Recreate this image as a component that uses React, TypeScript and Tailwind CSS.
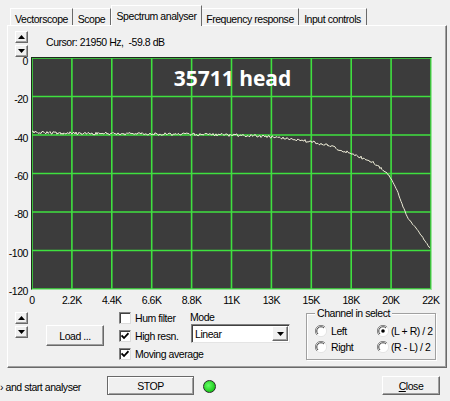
import React from "react";

const PLOT_W = 399;
const PLOT_H = 231;

const KEYS: [number, number][] = [
  [32, 132], [60, 133], [100, 133.5], [150, 134], [200, 134.5], [250, 135.5],
  [280, 137.5], [300, 140], [327, 145], [350, 153], [372, 162], [387, 173],
  [392, 180], [397, 190], [403, 207], [408, 218], [415, 227], [423, 238], [430, 248],
];

function interp(x: number): number {
  for (let i = 0; i < KEYS.length - 1; i++) {
    const [x0, y0] = KEYS[i];
    const [x1, y1] = KEYS[i + 1];
    if (x >= x0 && x <= x1) return y0 + ((y1 - y0) * (x - x0)) / (x1 - x0);
  }
  return KEYS[KEYS.length - 1][1];
}

function noise(i: number): number {
  const s = Math.sin(i * 12.9898 + 4.1) * 43758.5453;
  return s - Math.floor(s) - 0.5;
}

function curvePath(): string {
  const pts: string[] = [];
  for (let x = 32; x <= 430; x += 1) {
    const amp = x < 385 ? 2.8 : 1.2;
    const y = interp(x) + noise(x) * amp - 58;
    pts.push(`${(x - 32).toFixed(1)},${y.toFixed(1)}`);
  }
  return "M" + pts.join(" L");
}

function Plot() {
  const xs = Array.from({ length: 11 }, (_, i) => (i * PLOT_W) / 10);
  const ys = Array.from({ length: 7 }, (_, j) => (j * PLOT_H) / 6);
  return (
    <div className="relative ml-[2px] mt-[2px] w-[401px] h-[233px] border border-t-[#1e2a1e] border-l-[#1e2a1e] border-r-[#9be39b] border-b-[#9be39b] bg-[#3c3c3c]">
      <svg width={PLOT_W} height={PLOT_H} className="block">
        <rect x={0} y={0} width={PLOT_W} height={PLOT_H} fill="#3c3c3c" />
        {xs.map((x, i) => (
          <line key={"x" + i} x1={x} y1={0} x2={x} y2={PLOT_H} stroke="#3fe03f" strokeWidth={1.6} />
        ))}
        {ys.map((y, j) => (
          <line key={"y" + j} x1={0} y1={y} x2={PLOT_W} y2={y} stroke="#3fe03f" strokeWidth={1.6} />
        ))}
        <path d={curvePath()} fill="none" stroke="#ecebd6" strokeWidth={1} />
      </svg>
      <div className="absolute left-0 right-0 top-[6px] flex justify-center">
        <span className="font-['Open_Sans',sans-serif] font-bold text-[21px] leading-[28px] tracking-normal text-white ml-[2px]">35711 head</span>
      </div>
    </div>
  );
}

function ArrowUp() {
  return (
    <svg width="7" height="4" viewBox="0 0 7 4" className="block">
      <path d="M3.5 0 L7 4 L0 4 Z" fill="#000" />
    </svg>
  );
}
function ArrowDown() {
  return (
    <svg width="7" height="4" viewBox="0 0 7 4" className="block">
      <path d="M0 0 L7 0 L3.5 4 Z" fill="#000" />
    </svg>
  );
}

function UpDown() {
  return (
    <div className="flex flex-col gap-[2px] w-[13px]">
      <div className="h-[12px] w-[13px] flex items-center justify-center bg-[#f0f0f0] border border-t-white border-l-white border-r-[#696969] border-b-[#696969] shadow-[inset_-1px_-1px_0_#a0a0a0]">
        <ArrowUp />
      </div>
      <div className="h-[12px] w-[13px] flex items-center justify-center bg-[#f0f0f0] border border-t-white border-l-white border-r-[#696969] border-b-[#696969] shadow-[inset_-1px_-1px_0_#a0a0a0]">
        <ArrowDown />
      </div>
    </div>
  );
}

function CheckBox({ checked }: { checked: boolean }) {
  return (
    <div className="w-[12px] h-[12px] bg-white border border-t-[#808080] border-l-[#808080] border-r-[#dcdcdc] border-b-[#dcdcdc] shadow-[inset_1px_1px_0_#404040] flex items-center justify-center shrink-0">
      {checked && (
        <svg width="8" height="8" viewBox="0 0 8 8" className="block">
          <path d="M0.5 3.5 L3 6 L7.5 1.2" fill="none" stroke="#000" strokeWidth={1.8} />
        </svg>
      )}
    </div>
  );
}

function Radio({ checked }: { checked: boolean }) {
  return (
    <svg width="12" height="12" viewBox="0 0 12 12" className="block shrink-0">
      <circle cx="6" cy="6" r="5.5" fill="#fff" />
      <path d="M10 2 A5.5 5.5 0 0 0 2 10" fill="none" stroke="#808080" strokeWidth={1} />
      <path d="M9 3 A4.2 4.2 0 0 0 3 9" fill="none" stroke="#404040" strokeWidth={1} />
      <path d="M2 10 A5.5 5.5 0 0 0 10 2" fill="none" stroke="#e4e4e4" strokeWidth={1} />
      {checked && <circle cx="6" cy="6" r="1.8" fill="#000" />}
    </svg>
  );
}

function Tab({ label, cls }: { label: string; cls: string }) {
  return (
    <div className={cls}>
      <span className="whitespace-nowrap">{label}</span>
    </div>
  );
}

export default function App() {
  const yLabels = ["0", "-20", "-40", "-60", "-80", "-100", "-120"];
  const xLabels = ["0", "2.2K", "4.4K", "6.6K", "8.8K", "11K", "13K", "15K", "18K", "20K", "22K"];
  return (
    <div className="w-[450px] h-[401px] bg-[#f0f0f0] overflow-hidden flex flex-col text-black text-[10.5px] tracking-[-0.45px] leading-[12px] font-['Liberation_Sans',Arial,sans-serif]">
      {/* Tabs */}
      <div className="h-[25px] flex items-end pl-[10px] shrink-0">
        <Tab label="Vectorscope" cls="w-[63px] h-[17px] pt-[3px] flex items-center justify-center border-t border-l border-r border-t-white border-l-white border-r-[#6a6a6a]" />
        <Tab label="Scope" cls="w-[38px] h-[17px] pt-[3px] flex items-center justify-center border-t border-r border-t-white border-r-[#6a6a6a]" />
        <Tab label="Spectrum analyser" cls="relative z-10 mb-[-1px] w-[91px] h-[21px] flex items-center justify-center bg-[#f0f0f0] border-t border-l border-r border-t-white border-l-white border-r-[#6a6a6a]" />
        <Tab label="Frequency response" cls="w-[97px] h-[17px] pt-[3px] flex items-center justify-center border-t border-r border-t-white border-r-[#6a6a6a]" />
        <Tab label="Input controls" cls="w-[68px] h-[17px] pt-[3px] flex items-center justify-center border-t border-r border-t-white border-r-[#6a6a6a]" />
      </div>

      {/* Panel */}
      <div className="ml-[7px] w-[440px] h-[343px] shrink-0 border border-t-white border-l-white border-r-[#696969] border-b-[#696969] shadow-[inset_-1px_-1px_0_#a0a0a0] flex flex-col">
        {/* Header */}
        <div className="h-[24px] mt-[5px] flex items-start">
          <div className="ml-[7px]">
            <UpDown />
          </div>
          <div className="ml-[18px] mt-[5px] whitespace-pre">Cursor: 21950 Hz,  -59.8 dB</div>
        </div>

        {/* Chart */}
        <div className="h-[242px] flex items-start">
          <div className="w-[21px] h-[242px] pr-[1px] flex flex-col justify-between items-end">
            {yLabels.map((l) => (
              <div key={l} className="h-[12px] leading-[12px] whitespace-nowrap">{l}</div>
            ))}
          </div>
          <Plot />
        </div>

        {/* X labels */}
        <div className="mt-[-3px] ml-[12px] w-[423px] h-[12px] flex justify-between">
          {xLabels.map((l) => (
            <div key={l} className="w-[24px] flex justify-center whitespace-nowrap leading-[12px]">{l}</div>
          ))}
        </div>

        {/* Controls */}
        <div className="mt-[3px] flex items-start">
          <div className="ml-[7px] mt-[3px]">
            <UpDown />
          </div>
          <div className="ml-[18px] mt-[16px] w-[58px] h-[21px] flex items-center justify-center bg-[#f0f0f0] border border-t-white border-l-white border-r-[#696969] border-b-[#696969] shadow-[inset_-1px_-1px_0_#a0a0a0]">
            Load ...
          </div>
          <div className="ml-[15px] w-[71px] flex flex-col">
            <div className="h-[18px] flex items-center gap-[4px] whitespace-nowrap">
              <CheckBox checked={false} />
              <span>Hum filter</span>
            </div>
            <div className="h-[18px] flex items-center gap-[4px] whitespace-nowrap">
              <CheckBox checked={true} />
              <span>High resn.</span>
            </div>
            <div className="h-[18px] flex items-center gap-[4px] whitespace-nowrap">
              <CheckBox checked={true} />
              <span>Moving average</span>
            </div>
          </div>
          <div className="w-[100px] flex flex-col">
            <div className="mt-[2px] h-[12px] leading-[12px]">Mode</div>
            <div className="mt-[1px] ml-[1px] w-[99px] h-[19px] bg-white border border-t-[#808080] border-l-[#808080] border-r-[#e4e4e4] border-b-[#e4e4e4] shadow-[inset_1px_1px_0_#404040] flex items-center">
              <span className="ml-[3px] flex-1">Linear</span>
              <div className="mr-[1px] w-[16px] h-[15px] flex items-center justify-center bg-[#f0f0f0] border border-t-white border-l-white border-r-[#696969] border-b-[#696969] shadow-[inset_-1px_-1px_0_#a0a0a0]">
                <ArrowDown />
              </div>
            </div>
          </div>
          <div className="relative ml-[16px] mt-[4px] w-[130px] h-[47px] border border-[#a0a0a0] shadow-[inset_1px_1px_0_#fff,1px_1px_0_#fff]">
            <div className="absolute left-[8px] top-[-7px] px-[2px] bg-[#f0f0f0] leading-[12px] whitespace-nowrap">Channel in select</div>
            <div className="mt-[11px] ml-[8px] grid grid-cols-[62px_60px] gap-y-[4px]">
              <div className="h-[12px] flex items-center gap-[4px] whitespace-nowrap"><Radio checked={false} /><span>Left</span></div>
              <div className="h-[12px] flex items-center gap-[2px] whitespace-nowrap"><Radio checked={true} /><span>(L + R) / 2</span></div>
              <div className="h-[12px] flex items-center gap-[4px] whitespace-nowrap"><Radio checked={false} /><span>Right</span></div>
              <div className="h-[12px] flex items-center gap-[2px] whitespace-nowrap"><Radio checked={false} /><span>(R - L) / 2</span></div>
            </div>
          </div>
        </div>
      </div>

      {/* Bottom bar */}
      <div className="mt-[8px] flex items-start">
        <div className="w-[107px] pt-[5px] whitespace-pre leading-[12px]">› and start analyser</div>
        <div className="w-[87px] h-[19px] flex items-center justify-center bg-[#f0f0f0] border border-[#696969] shadow-[inset_1px_1px_0_#fff,inset_-1px_-1px_0_#a0a0a0]">
          STOP
        </div>
        <div className="ml-[9px] mt-[4px] w-[13px] h-[13px] rounded-full border border-[#2a2a2a] bg-[radial-gradient(circle_at_40%_40%,#66ff66,#1ecb1e_70%)]" />
        <div className="ml-auto mr-[10px] w-[58px] h-[19px] flex items-center justify-center bg-[#f0f0f0] border border-t-white border-l-white border-r-[#696969] border-b-[#696969] shadow-[inset_-1px_-1px_0_#a0a0a0]">
          <span><span className="underline">C</span>lose</span>
        </div>
      </div>
    </div>
  );
}
